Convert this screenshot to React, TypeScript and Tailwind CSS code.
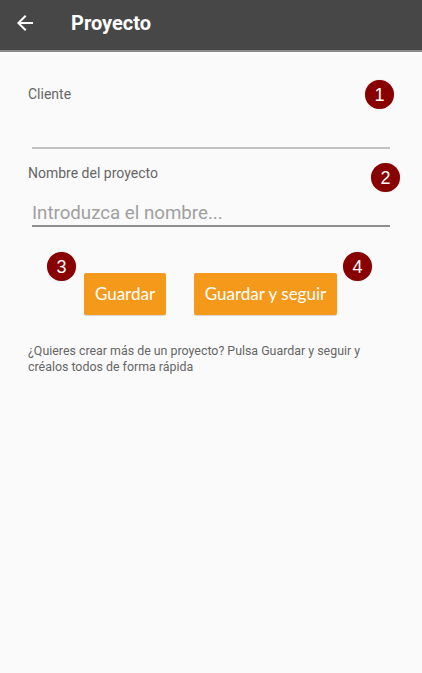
import React from "react";

function Badge({ n, className }: { n: string; className: string }) {
  return (
    <div
      className={`absolute w-[29px] h-[29px] rounded-full bg-[#880000] text-white flex items-center justify-center text-[18px] leading-none font-['Liberation_Sans',sans-serif] shadow-[0_0_1px_rgba(0,0,0,0.3)] ${className}`}
    >
      {n}
    </div>
  );
}

export default function App() {
  return (
    <div className="relative w-[422px] h-[673px] bg-[#fafafa] font-['Roboto',sans-serif] overflow-hidden">
      <header className="h-[52px] pb-[4px] bg-[#474747] border-b-2 border-[#8a8a8a] flex items-center">
        <svg className="ml-[13px] w-6 h-6" viewBox="0 0 24 24" fill="#ffffff">
          <path d="M20 11H7.83l5.59-5.59L12 4l-8 8 8 8 1.41-1.41L7.83 13H20v-2z" />
        </svg>
        <h1 className="ml-[34px] text-white text-[20px] font-bold leading-none">
          Proyecto
        </h1>
      </header>

      <main className="px-[28px] pt-[32px] flex flex-col">
        <div className="flex flex-col">
          <div className="text-[14px] leading-5 text-[#666666]">Cliente</div>
          <div className="mt-[43px] ml-[4px] w-[358px] h-[2px] bg-[#c2c2c2]" />
        </div>

        <div className="mt-[14px] flex flex-col">
          <div className="text-[14px] leading-5 text-[#666666]">
            Nombre del proyecto
          </div>
          <div className="mt-[18px] ml-[4px] w-[358px] h-6 text-[18.7px] leading-6 text-[#a0a0a0] border-b-2 border-[#8f8f8f] box-content">
            Introduzca el nombre...
          </div>
        </div>

        <div className="mt-[46px] ml-[56px] flex gap-[28px]">
          <button className="w-[82px] h-[42px] rounded-[2px] bg-[#f5991b] text-white text-[17px] font-['Lato',sans-serif] shadow-[0_1px_1px_rgba(0,0,0,0.15)]">
            Guardar
          </button>
          <button className="w-[143px] h-[42px] rounded-[2px] bg-[#f5991b] text-white text-[17px] font-['Lato',sans-serif] shadow-[0_1px_1px_rgba(0,0,0,0.15)]">
            Guardar y seguir
          </button>
        </div>

        <p className="mt-[28px] text-[12.4px] leading-4 text-[#666666]">
          ¿Quieres crear más de un proyecto? Pulsa Guardar y seguir y
          <br />
          créalos todos de forma rápida
        </p>
      </main>

      <Badge n="1" className="left-[365px] top-[80px]" />
      <Badge n="2" className="left-[371px] top-[163px]" />
      <Badge n="3" className="left-[47px] top-[252px]" />
      <Badge n="4" className="left-[343px] top-[252px]" />
    </div>
  );
}
